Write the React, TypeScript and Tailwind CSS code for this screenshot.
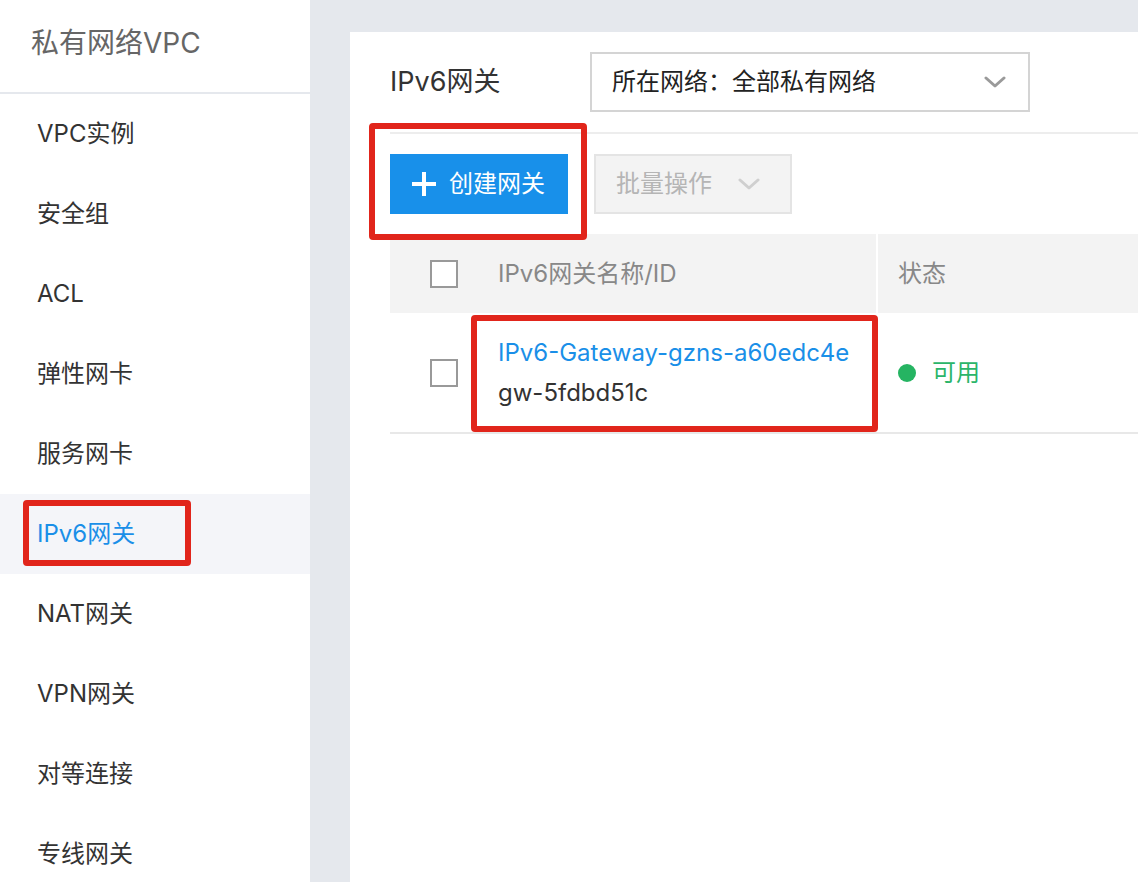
import React from 'react';

const navItems = ['VPC实例', '安全组', 'ACL', '弹性网卡', '服务网卡', 'IPv6网关', 'NAT网关', 'VPN网关', '对等连接', '专线网关'];

const Chevron = ({ color }: { color: string }) => (
    <svg width="22" height="14" viewBox="0 0 22 14" fill="none">
        <polyline points="2,3 11,11 20,3" stroke={color} strokeWidth="3" strokeLinecap="round" strokeLinejoin="round" />
    </svg>
);

const Checkbox = () => <div className="w-[28px] h-[28px] border-2 border-[#999] bg-white" />;

const Sidebar = () => (
    <div className="w-[310px] shrink-0 bg-white h-full flex flex-col">
        <div className="h-[92px] shrink-0 flex items-center pl-[31px] text-[28px] text-[#666] pb-[6px]">私有网络VPC</div>
        <div className="h-[2px] shrink-0 bg-[#e5e8ed]" />
        {navItems.map(item => {
            const active = item === 'IPv6网关';
            return (
                <div
                    key={item}
                    className={`relative h-[80px] shrink-0 flex items-center pl-[37px] text-[24px] ${active ? 'bg-[#f4f5f9] text-[#1a8fe8]' : 'text-[#333]'}`}
                >
                    {item}
                    {active && (
                        <div className="absolute left-[23px] top-[6px] w-[168px] h-[66px] border-[6px] border-[#e1251b] rounded-[4px]" />
                    )}
                </div>
            );
        })}
    </div>
);

export default function App() {
    return (
        <div className="w-[1138px] h-[882px] overflow-hidden flex bg-[#e5e8ed] font-['Inter','Noto_Sans_CJK_SC',sans-serif]">
            <Sidebar />
            <div className="flex-1 pl-[40px] pt-[32px] flex min-w-0">
                <div className="flex-1 bg-white pl-[40px] flex flex-col">
                    {/* header */}
                    <div className="h-[100px] flex items-center">
                        <div className="w-[200px] text-[27px] text-[#333]">IPv6网关</div>
                        <div className="w-[440px] h-[60px] border-2 border-[#d4d4d4] flex items-center justify-between pl-[20px] pr-[22px]">
                            <span className="text-[24px] text-[#222]">所在网络：全部私有网络</span>
                            <Chevron color="#9a9a9a" />
                        </div>
                    </div>
                    <div className="h-[2px] bg-[#ededed]" />

                    {/* toolbar */}
                    <div className="pt-[20px] flex gap-[26px]">
                        <div className="relative">
                            <button className="w-[178px] h-[60px] bg-[#1890ea] text-white text-[24px] flex items-center pl-[22px] gap-[13px]">
                                <svg width="24" height="24" viewBox="0 0 24 24">
                                    <rect x="0" y="10" width="24" height="4" fill="white" />
                                    <rect x="10" y="0" width="4" height="24" fill="white" />
                                </svg>
                                创建网关
                            </button>
                            <div className="absolute -left-[21px] -top-[31px] -right-[19px] -bottom-[26px] border-[6px] border-[#e1251b] rounded-[4px]" />
                        </div>
                        <button className="w-[198px] h-[60px] bg-[#f3f3f3] border-2 border-[#e4e4e4] text-[#b5b5b5] text-[24px] flex items-center pl-[20px] gap-[26px]">
                            批量操作
                            <Chevron color="#cfcfcf" />
                        </button>
                    </div>

                    {/* table */}
                    <div className="mt-[20px]">
                        <div className="h-[79px] bg-[#f3f3f3] flex items-center text-[24px] text-[#888]">
                            <div className="w-[88px] pl-[40px] shrink-0">
                                <Checkbox />
                            </div>
                            <div className="w-[398px] shrink-0 pl-[20px] h-full flex items-center">IPv6网关名称/ID</div>
                            <div className="w-[2px] h-full bg-white shrink-0" />
                            <div className="pl-[20px]">状态</div>
                        </div>
                        <div className="h-[121px] border-b-2 border-[#e8e8e8] flex items-center text-[24px]">
                            <div className="w-[88px] pl-[40px] shrink-0">
                                <Checkbox />
                            </div>
                            <div className="relative w-[398px] shrink-0 pl-[20px] h-full flex flex-col justify-center">
                                <span className="leading-[40px] text-[#1a8fe8]">IPv6-Gateway-gzns-a60edc4e</span>
                                <span className="leading-[40px] text-[#333]">gw-5fdbd51c</span>
                                <div className="absolute -left-[7px] -right-[2px] top-[2px] bottom-0 border-[6px] border-[#e1251b] rounded-[4px]" />
                            </div>
                            <div className="w-[2px] shrink-0" />
                            <div className="pl-[20px] flex items-center gap-[16px] text-[#2bb56a]">
                                <span className="w-[18px] h-[18px] rounded-full bg-[#25b462]" />
                                可用
                            </div>
                        </div>
                    </div>
                </div>
            </div>
        </div>
    );
}
